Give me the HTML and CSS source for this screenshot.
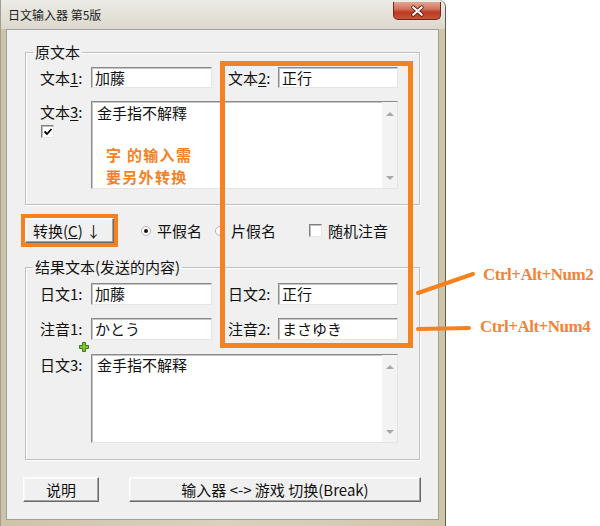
FILE: index.html
```html
<!DOCTYPE html>
<html lang="zh">
<head>
<meta charset="utf-8">
<title>日文输入器 第5版</title>
<link rel="stylesheet" href="styles.css">
</head>
<body>
<div class="page">
  <div class="window">
    <div class="titlebar">
      <span class="title">日文输入器 第5版</span>
      <span class="close">
        <svg width="48" height="18" viewBox="0 0 48 18">
          <path d="M20 5 L29 13 M29 5 L20 13" stroke="#5a1a10" stroke-width="4" stroke-linecap="round" fill="none"/>
          <path d="M20 5 L29 13 M29 5 L20 13" stroke="#ffffff" stroke-width="2.2" stroke-linecap="round" fill="none"/>
        </svg>
      </span>
    </div>
    <div class="client">
      <fieldset class="group g1">
        <legend>原文本</legend>
        <div class="row r-edit">
          <label class="lbl">文本<u>1</u>:</label>
          <div class="edit e1">加藤</div>
          <label class="lbl lbl2">文本<u>2</u>:</label>
          <div class="edit e2">正行</div>
        </div>
        <div class="row r-memo m1row">
          <div class="lblcol">
            <label class="lbl">文本<u>3</u>:</label>
            <span class="check">
              <svg width="10" height="10" viewBox="0 0 10 10"><path d="M1.5 4.5 L4 7 L8.5 2" stroke="#000" stroke-width="1.8" fill="none"/></svg>
            </span>
          </div>
          <div class="memo m1">
            <div class="memo-text">
              <div class="first">金手指不解釋</div>
              <div class="note">
                <div class="note-line">字 的输入需</div>
                <div class="note-line">要另外转换</div>
              </div>
            </div>
            <div class="vscroll"><span class="arr up"></span><span class="arr down"></span></div>
          </div>
        </div>
      </fieldset>

      <div class="ctrl">
        <span class="hl-btn"><span class="btn conv">转换(<u>C</u>) ↓</span></span>
        <span class="radio r1"><span class="dot"></span></span>
        <span class="opt">平假名</span>
        <span class="radio r2"></span>
        <span class="opt">片假名</span>
        <span class="box"></span>
        <span class="opt">随机注音</span>
      </div>

      <fieldset class="group g2">
        <legend>结果文本(发送的内容)</legend>
        <div class="row r-edit2">
          <label class="lbl">日文1:</label>
          <div class="edit e1">加藤</div>
          <label class="lbl lbl2">日文2:</label>
          <div class="edit e2">正行</div>
        </div>
        <div class="row r-edit2 second">
          <label class="lbl">注音1:</label>
          <div class="edit e1">かとう</div>
          <label class="lbl lbl2">注音2:</label>
          <div class="edit e2">まさゆき</div>
        </div>
        <div class="row r-memo m2row">
          <div class="lblcol">
            <svg class="plus" width="10" height="10" viewBox="0 0 10 10"><path d="M3.5 0.5 H6.5 V3.5 H9.5 V6.5 H6.5 V9.5 H3.5 V6.5 H0.5 V3.5 H3.5 Z" fill="#7fc23a" stroke="#3f7a12" stroke-width="1"/></svg>
            <label class="lbl">日文3:</label>
          </div>
          <div class="memo m2">
            <div class="memo-text">金手指不解释</div>
            <div class="vscroll"><span class="arr up"></span><span class="arr down"></span></div>
          </div>
        </div>
      </fieldset>

      <div class="buttons">
        <span class="btn help">说明</span>
        <span class="btn switch">输入器 &lt;-&gt; 游戏 切换(Break)</span>
      </div>
    </div>
  </div>

  <div class="hl-frame"></div>
  <svg class="leaders" width="600" height="526" viewBox="0 0 600 526">
    <line x1="418" y1="293" x2="473" y2="274" stroke="#f5821f" stroke-width="4" stroke-linecap="round"/>
    <line x1="418" y1="329" x2="469" y2="328" stroke="#f5821f" stroke-width="4" stroke-linecap="round"/>
  </svg>
  <span class="anno a1">Ctrl+Alt+Num2</span>
  <span class="anno a2">Ctrl+Alt+Num4</span>
</div>
</body>
</html>
```

FILE: styles.css
```css
html, body {
  margin: 0;
  padding: 0;
  background: #ffffff;
}

.page {
  position: relative;
  width: 600px;
  height: 526px;
  overflow: hidden;
  font-family: "Noto Sans CJK SC", "Noto Sans", sans-serif;
  color: #111;
}

.window {
  box-sizing: border-box;
  width: 446px;
  height: 526px;
  display: flex;
  flex-direction: column;
  background: linear-gradient(90deg, #cdc4a8 0%, #d9d2bc 50%, #cfc6aa 100%);
  border-left: 1px solid #a29d8e;
  border-right: 1px solid #5c5a52;
  border-top-right-radius: 7px;
}

.titlebar {
  height: 29px;
  flex: none;
  display: flex;
  align-items: flex-start;
  justify-content: space-between;
  background: linear-gradient(#ecebe6, #dcd8cd);
  border-top-right-radius: 7px;
}

.title {
  font-size: 12px;
  line-height: 16px;
  margin: 7px 0 0 7px;
  color: #1b1b1b;
}

.close {
  width: 48px;
  height: 18px;
  margin: 2px 4px 0 0;
  display: flex;
  border: 1px solid #6d2a1c;
  border-top: none;
  box-sizing: border-box;
  border-radius: 0 0 5px 5px;
  background: linear-gradient(#e2a593 0%, #d2765e 40%, #bb3b22 60%, #c9513a 100%);
}

.client {
  flex: 1;
  margin: 0 6px 6px 5px;
  background: #f0f0f0;
  border: 1px solid #9f9f9f;
  display: flex;
  flex-direction: column;
  align-items: flex-start;
}

/* group boxes */
.group {
  box-sizing: border-box;
  min-width: 0;
  width: 395px;
  margin: 0 0 0 18px;
  border: 1px solid #bfbfbf;
  box-shadow: inset 1px 1px 0 #ffffff, 1px 1px 0 #ffffff;
}

.group legend {
  margin-left: 7px;
  padding: 0 2px;
  font-size: 15px;
  line-height: 16px;
  color: #111;
}

.g1 {
  margin-top: 14px;
  padding: 7px 0 15px 0;
}

.g2 {
  margin-top: 12px;
  padding: 8px 0 16px 0;
}

.row {
  display: flex;
  margin-left: 14px;
}

.r-edit {
  height: 21px;
  align-items: center;
}

.r-edit2 {
  height: 22px;
  align-items: center;
}

.r-edit2.second {
  margin-top: 13px;
}

.lbl {
  flex: none;
  width: 51px;
  font-size: 15px;
  line-height: 18px;
  color: #111;
}

.lbl u {
  text-decoration-thickness: 1px;
  text-underline-offset: 2px;
}

.lbl2 {
  width: 50px;
  margin-left: 16px;
}

.edit {
  box-sizing: border-box;
  height: 100%;
  background: #ffffff;
  border: 1px solid;
  border-color: #8a8a8a #e4e4e4 #e4e4e4 #8a8a8a;
  box-shadow: inset 1px 1px 0 #c6c6c6;
  font-size: 15px;
  line-height: 18px;
  padding: 1px 0 0 3px;
  color: #111;
  white-space: nowrap;
}

.e1 { width: 121px; }
.e2 { width: 120px; }

.r-memo {
  align-items: flex-start;
}

.m1row { margin-top: 13px; }
.m2row { margin-top: 14px; }

.lblcol {
  position: relative;
  flex: none;
  width: 51px;
  display: flex;
  flex-direction: column;
  align-items: flex-start;
}

.lblcol .lbl {
  margin-top: 2px;
}

.check {
  box-sizing: border-box;
  width: 13px;
  height: 13px;
  margin: 4px 0 0 1px;
  display: flex;
  align-items: center;
  justify-content: center;
  background: #ffffff;
  border: 1px solid;
  border-color: #808080 #e6e6e6 #e6e6e6 #808080;
  box-shadow: inset 1px 1px 0 #bdbdbd;
}

.plus {
  position: absolute;
  left: 39px;
  top: -12px;
}

.memo {
  box-sizing: border-box;
  width: 307px;
  display: flex;
  background: #ffffff;
  border: 1px solid;
  border-color: #8a8a8a #e4e4e4 #e4e4e4 #8a8a8a;
  box-shadow: inset 1px 1px 0 #c6c6c6;
}

.m1 { height: 88px; }
.m2 { height: 89px; }

.memo-text {
  flex: 1;
  font-size: 15px;
  line-height: 18px;
  padding: 2px 5px;
  color: #111;
}

.m2 .memo-text {
  padding-top: 1px;
}

.note {
  margin: 22px 0 0 9px;
  color: #f5821f;
  font-weight: bold;
  font-size: 15px;
  line-height: 22px;
  letter-spacing: 1.3px;
}

.vscroll {
  flex: none;
  width: 15px;
  background: #f3f3f3;
  display: flex;
  flex-direction: column;
  align-items: center;
  justify-content: space-between;
  padding: 10px 0 8px;
  box-sizing: border-box;
}

.arr {
  width: 0;
  height: 0;
  border-left: 4px solid transparent;
  border-right: 4px solid transparent;
}

.arr.up { border-bottom: 4px solid #a9a9a9; }
.arr.down { border-top: 4px solid #a9a9a9; }

/* control row */
.ctrl {
  display: flex;
  align-items: center;
  height: 33px;
  margin: 9px 0 0 14px;
}

.hl-btn {
  box-sizing: border-box;
  width: 97px;
  height: 33px;
  border: 4px solid #f5821f;
  display: flex;
}

.btn {
  box-sizing: border-box;
  display: flex;
  align-items: center;
  justify-content: center;
  background: #f0f0f0;
  border: 1px solid;
  border-color: #ffffff #696969 #696969 #ffffff;
  box-shadow: inset -1px -1px 0 #a3a3a3, inset 1px 1px 0 #f8f8f8;
  font-size: 15px;
  line-height: 18px;
  color: #111;
  white-space: nowrap;
}

.conv {
  width: 100%;
  height: 100%;
  justify-content: flex-start;
  padding-left: 7px;
}

.radio {
  box-sizing: border-box;
  width: 10px;
  height: 10px;
  border-radius: 50%;
  background: #ffffff;
  border: 1px solid #b4b4b4;
  display: flex;
  align-items: center;
  justify-content: center;
}

.radio .dot {
  width: 4px;
  height: 4px;
  border-radius: 50%;
  background: #111;
}

.r1 { margin-left: 23px; }
.r2 { margin-left: 13px; }

.opt {
  margin-left: 6px;
  font-size: 15px;
  line-height: 18px;
  color: #111;
}

.box {
  box-sizing: border-box;
  width: 13px;
  height: 13px;
  margin-left: 33px;
  background: #ffffff;
  border: 1px solid;
  border-color: #808080 #e6e6e6 #e6e6e6 #808080;
  box-shadow: inset 1px 1px 0 #bdbdbd;
}

/* bottom buttons */
.buttons {
  display: flex;
  margin: 17px 0 0 16px;
}

.help {
  width: 76px;
  height: 25px;
}

.switch {
  width: 292px;
  height: 25px;
  margin-left: 30px;
}

/* annotations */
.hl-frame {
  position: absolute;
  left: 220px;
  top: 61px;
  width: 193px;
  height: 287px;
  box-sizing: border-box;
  border: 5px solid #f5821f;
}

.leaders {
  position: absolute;
  left: 0;
  top: 0;
}

.anno {
  position: absolute;
  font-family: "Liberation Serif", serif;
  font-weight: bold;
  font-size: 17px;
  line-height: 20px;
  letter-spacing: -0.5px;
  color: #f0843a;
  white-space: nowrap;
}

.a1 { left: 483px; top: 265px; }
.a2 { left: 480px; top: 317px; }
```
